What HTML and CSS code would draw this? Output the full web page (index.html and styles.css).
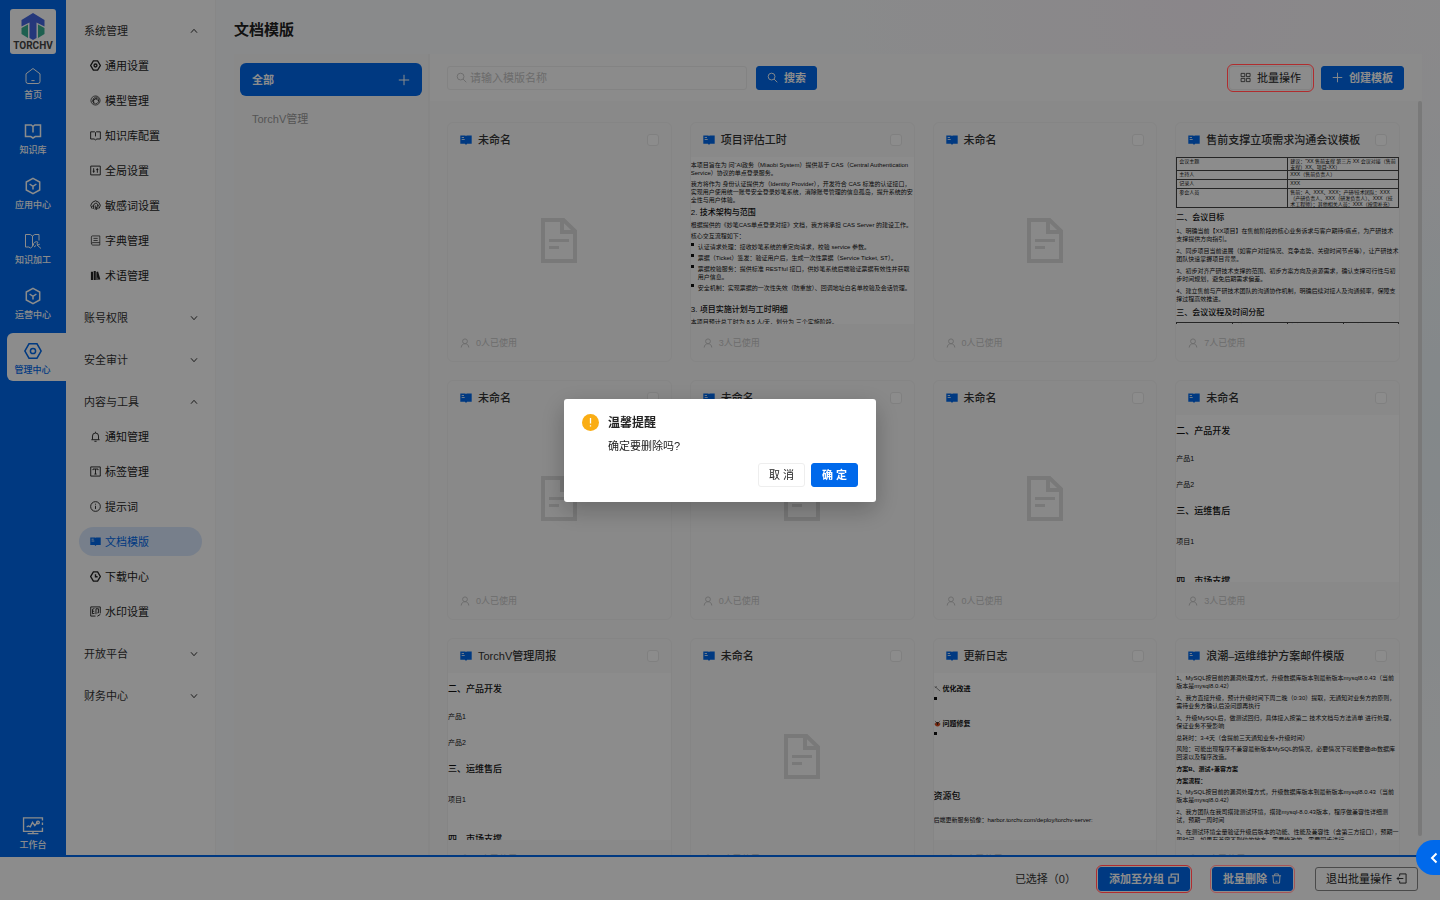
FILE: index.html
```html
<!DOCTYPE html>
<html lang="zh-CN">
<head>
<meta charset="utf-8">
<meta name="viewport" content="width=device-width, initial-scale=1">
<title>文档模版</title>
<link rel="stylesheet" href="styles.css">
</head>
<body>
<svg class="sprite" aria-hidden="true">
  <symbol id="i-home" viewBox="0 0 18 18"><path d="M2 6.800 9 1.500l7 5.300v7.700a2 2 0 0 1-2 2H4a2 2 0 0 1-2-2zM7.400 13.600h3.200"/></symbol>
  <symbol id="i-book" viewBox="0 0 18 18"><path d="M1.500 3h5.700L9 4.500 10.800 3h5.700v11.500h-5.200L9 16l-2.300-1.500H1.500zM9 4.500v6"/></symbol>
  <symbol id="i-cube" viewBox="0 0 18 18"><path d="M9 1.300 15.700 5v8L9 16.700 2.300 13V5zM5.600 7 9 9.300 12.400 7M9 9.300v3.200"/></symbol>
  <symbol id="i-bookpen" viewBox="0 0 18 18"><path d="M8.500 14.500 6.500 16 4.800 15H1.500V2.500h4.700L8.500 4l2.200-1.500h4.300v6M8.500 4v10.500"/><path d="M9.500 13.500a3 3 0 0 1 4.500-3.300l-1.200 1.800 1 1 2-.8M13 13l4 3.500M10 15l2-1.500"/></symbol>
  <symbol id="i-hexgear" viewBox="0 0 18 18"><path d="M5 1.800h8L17.200 9 13 16.200H5L.8 9z"/><circle cx="9" cy="9" r="2.600"/></symbol>
  <symbol id="i-desk" viewBox="0 0 24 20"><path d="M22.500 4V1H1.500v15h21v-4M22.500 6v3M6 18.500h12M12 16v2.500"/><path d="m5 11 2-1 2 1 2.500-5L14 9.500l3-3.500"/><circle cx="17.500" cy="6" r="1.500"/></symbol>
  <symbol id="i-gear" viewBox="0 0 12 12"><path d="M3.700 1h4.600L11.300 6 8.300 11H3.700L.7 6z"/><circle cx="6" cy="6" r="1.600"/></symbol>
  <symbol id="i-model" viewBox="0 0 12 12"><circle cx="6" cy="6" r="5"/><path d="m3.500 4 3-2 3 2.200v3.600l-3.300 2-3-2zM2 7l4-3 4 2.500M4 9.500V5l4-1.500"/></symbol>
  <symbol id="i-sbook" viewBox="0 0 12 12"><path d="M.7 2H5l1 .9L7 2h4.300v7.800H7.500L6 10.800 4.500 9.800H.7zM6 3v4"/></symbol>
  <symbol id="i-slider" viewBox="0 0 12 12"><path d="M.8 1.200h10.400v9.600H.8zM4 3.500v5M8 3.500v5M2.900 6.800h2.200M6.900 5h2.200"/></symbol>
  <symbol id="i-finger" viewBox="0 0 12 12"><path d="M2.200 9.300A5 5 0 1 1 10 9.200M3.500 9.800C4.500 7 3 5 5.500 3.800S9 5 8.500 10M5.500 10.500C6.500 8 5 6.500 6.200 6M1.800 7.500 4 5.500M7 10.800V7.500M9.800 5 8 7"/></symbol>
  <symbol id="i-dict" viewBox="0 0 12 12"><path d="M1.500 9.500V2.200A1.200 1.200 0 0 1 2.700 1h8v10H2.800a1.400 1.400 0 0 1 0-2.700h7.900M3.800 3.700h4.600M3.800 6h4.600"/></symbol>
  <symbol id="i-terms" viewBox="0 0 12 12"><path class="solid" d="M1 2h2.300v9H1zM4 1h2.300v10H4zM7 2.300l1.800-.6L11.300 10l-2 .8L8.300 7.500V11H7z"/></symbol>
  <symbol id="i-bell" viewBox="0 0 12 12"><path d="M1.500 9.500h9M2.700 9.300V5.500a3.300 3.300 0 0 1 6.600 0v3.800M6 2V.8M4.800 11.200h2.400"/></symbol>
  <symbol id="i-tag" viewBox="0 0 12 12"><path d="M.8 1h10.400v10H.8zM3.300 4.500V3.300h5.400v1.200M6 3.300v5.500M4.800 8.800h2.400"/></symbol>
  <symbol id="i-info" viewBox="0 0 12 12"><circle cx="6" cy="6" r="5.300"/><path d="M6 5.200v3.500M6 3v1"/></symbol>
  <symbol id="i-doc" viewBox="0 0 12 12"><path class="solid" d="M.3 1.500h4.900l.8.500.8-.5h4.900v8.300H7L6 10.900 5 9.800H.3z"/><path class="cut" d="M1.700 3.500h2.300M1.700 5.500h3"/></symbol>
  <symbol id="i-clock" viewBox="0 0 12 12"><path d="M3.700 1h4.600L11.300 6 8.300 11H3.700L.7 6zM6 3.500v2.800h2.300"/></symbol>
  <symbol id="i-water" viewBox="0 0 12 12"><path d="M11.200 8V1H.8v10H6M4.800 2.800 2.700 3.500v5l2.300-.6M2.700 5.700h2M6.500 9V3h2.700v4.500H8M8 11.200l3.200-2"/></symbol>
  <symbol id="i-down" viewBox="0 0 8 8"><path d="m1 2.300 3 3.400 3-3.400"/></symbol>
  <symbol id="i-up" viewBox="0 0 8 8"><path d="m1 5.700 3-3.400 3 3.400"/></symbol>
  <symbol id="i-plus" viewBox="0 0 12 12"><path d="M6 .8v10.400M.8 6h10.400"/></symbol>
  <symbol id="i-search" viewBox="0 0 12 12"><circle cx="5" cy="5" r="3.700"/><path d="m7.700 7.700 3.500 3.500"/></symbol>
  <symbol id="i-grid" viewBox="0 0 12 12"><path d="M1.200 1.500h4v3.500h-4zM7 1.500h4v3.500H7zM1.200 7h4v3.500h-4zM7 7h4v3.500H7z"/></symbol>
  <symbol id="i-user" viewBox="0 0 10 10"><circle cx="5" cy="3.300" r="2.400"/><path d="M1.200 9.500c.2-2.300 1.500-3.800 3.800-3.800s3.600 1.500 3.800 3.800"/></symbol>
  <symbol id="i-file" viewBox="0 0 36 45"><path d="M2 2h20.500L34 13v30H2zM21 2v12h13"/><path stroke-width="3" d="M8 22.500h20M8 29.500h10"/></symbol>
  <symbol id="i-copy" viewBox="0 0 12 12"><path d="M3.500 3.500V1.200h7.700v7.600H9M1 4.500h6.800v6.400H1z"/></symbol>
  <symbol id="i-trash" viewBox="0 0 12 12"><path d="M1 3h10M4 3V1h4v2M2.200 3.200l.5 7.800h6.600l.5-7.800M5 9h2"/></symbol>
  <symbol id="i-exit" viewBox="0 0 12 12"><path d="M4 3.200V1h7v10H4V8.800M8 6H1.200M3.200 4 1.200 6l2 2"/></symbol>
</svg>

<div class="app">
  <div class="body">
    <nav class="rail" aria-label="主导航">
      <a class="logo" href="#">
        <svg viewBox="0 0 24 27" aria-hidden="true"><path fill="#4467e0" d="M12 0 23.500 7v6.500L15.500 9.500V25L12 27l-3.500-2V9.500L.5 13.500V7z"/><path fill="#38b092" d="M.5 15 7 11.500V25L.5 21zM23.500 15 17 11.500V25l6.500-4z"/></svg>
        <span>TORCHV</span>
      </a>
      <a class="rail-item" href="#"><svg><use href="#i-home"/></svg><span>首页</span></a>
      <a class="rail-item" href="#"><svg class="bold"><use href="#i-book"/></svg><span>知识库</span></a>
      <a class="rail-item" href="#"><svg class="bold"><use href="#i-cube"/></svg><span>应用中心</span></a>
      <a class="rail-item" href="#"><svg><use href="#i-bookpen"/></svg><span>知识加工</span></a>
      <a class="rail-item" href="#"><svg class="bold"><use href="#i-cube"/></svg><span>运营中心</span></a>
      <a class="rail-item active" href="#" aria-current="page"><svg class="bold"><use href="#i-hexgear"/></svg><span>管理中心</span></a>
      <a class="rail-item rail-bottom" href="#"><svg class="desk"><use href="#i-desk"/></svg><span>工作台</span></a>
    </nav>

    <nav class="side" aria-label="管理菜单">
      <section>
        <button class="group" type="button">系统管理<svg><use href="#i-up"/></svg></button>
        <a class="link" href="#"><svg class="bold"><use href="#i-gear"/></svg>通用设置</a>
        <a class="link" href="#"><svg class="thin"><use href="#i-model"/></svg>模型管理</a>
        <a class="link" href="#"><svg><use href="#i-sbook"/></svg>知识库配置</a>
        <a class="link" href="#"><svg><use href="#i-slider"/></svg>全局设置</a>
        <a class="link" href="#"><svg><use href="#i-finger"/></svg>敏感词设置</a>
        <a class="link" href="#"><svg class="thin"><use href="#i-dict"/></svg>字典管理</a>
        <a class="link" href="#"><svg><use href="#i-terms"/></svg>术语管理</a>
      </section>
      <section><button class="group" type="button">账号权限<svg><use href="#i-down"/></svg></button></section>
      <section><button class="group" type="button">安全审计<svg><use href="#i-down"/></svg></button></section>
      <section>
        <button class="group" type="button">内容与工具<svg><use href="#i-up"/></svg></button>
        <a class="link" href="#"><svg><use href="#i-bell"/></svg>通知管理</a>
        <a class="link" href="#"><svg><use href="#i-tag"/></svg>标签管理</a>
        <a class="link" href="#"><svg><use href="#i-info"/></svg>提示词</a>
        <a class="link current" href="#" aria-current="page"><svg><use href="#i-doc"/></svg>文档模版</a>
        <a class="link" href="#"><svg class="bold"><use href="#i-clock"/></svg>下载中心</a>
        <a class="link" href="#"><svg><use href="#i-water"/></svg>水印设置</a>
      </section>
      <section><button class="group" type="button">开放平台<svg><use href="#i-down"/></svg></button></section>
      <section><button class="group" type="button">财务中心<svg><use href="#i-down"/></svg></button></section>
    </nav>

    <main class="main">
      <h1>文档模版</h1>
      <div class="panel">
        <aside class="folders">
          <div class="folder selected"><a href="#">全部</a><button type="button" aria-label="新增分组"><svg><use href="#i-plus"/></svg></button></div>
          <a class="folder" href="#">TorchV管理</a>
        </aside>
        <div class="content">
          <div class="toolbar">
            <label class="search"><svg><use href="#i-search"/></svg><input type="text" placeholder="请输入模版名称" aria-label="模版名称"></label>
            <button class="btn primary" type="button"><svg><use href="#i-search"/></svg>搜索</button>
            <button class="btn ring push" type="button"><svg class="thin"><use href="#i-grid"/></svg>批量操作</button>
            <button class="btn primary" type="button"><svg><use href="#i-plus"/></svg>创建模板</button>
          </div>
          <div class="list">
            <div class="cards">
              <article class="card">
                <header><svg><use href="#i-doc"/></svg><h2>未命名</h2><input type="checkbox" aria-label="选择未命名"></header>
                <div class="preview empty"><svg><use href="#i-file"/></svg></div>
                <footer><svg><use href="#i-user"/></svg>0人已使用</footer>
              </article>
              <article class="card">
                <header><svg><use href="#i-doc"/></svg><h2>项目评估工时</h2><input type="checkbox" aria-label="选择项目评估工时"></header>
                <div class="preview plan">
                  <p>本项目旨在为 问“AI政务（Miaobi System）提供基于 CAS（Central Authentication Service）协议的单点登录服务。</p>
                  <p>我方将作为 身份认证提供方（Identity Provider），开发符合 CAS 标准的认证接口，实现用户使用统一账号安全登录妙笔系统，消除账号管理的信息孤岛，提升系统的安全性与用户体验。</p>
                  <h3>2. 技术架构与范围</h3>
                  <p>根据提供的《妙笔CAS单点登录对接》文档，我方将承担 CAS Server 的建设工作。</p>
                  <p>核心交互流程如下：</p>
                  <ul>
                    <li><span>认证请求处理：接收妙笔系统的重定向请求，校验 service 参数。</span></li>
                    <li><span>票据（Ticket）签发：验证用户后，生成一次性票据（Service Ticket, ST）。</span></li>
                    <li><span>票据校验服务：提供标准 RESTful 接口，供妙笔系统后端验证票据有效性并获取用户信息。</span></li>
                    <li><span>安全机制：实现票据的一次性失效（防重放）、回调地址白名单校验及会话管理。</span></li>
                  </ul>
                  <h3>3. 项目实施计划与工时明细</h3>
                  <p>本项目预计总工时为 8.5 人/天，划分为 三个实施阶段。</p>
                </div>
                <footer><svg><use href="#i-user"/></svg>3人已使用</footer>
              </article>
              <article class="card">
                <header><svg><use href="#i-doc"/></svg><h2>未命名</h2><input type="checkbox" aria-label="选择未命名"></header>
                <div class="preview empty"><svg><use href="#i-file"/></svg></div>
                <footer><svg><use href="#i-user"/></svg>0人已使用</footer>
              </article>
              <article class="card">
                <header><svg><use href="#i-doc"/></svg><h2>售前支撑立项需求沟通会议模板</h2><input type="checkbox" aria-label="选择售前支撑立项需求沟通会议模板"></header>
                <div class="preview meeting">
                  <table>
                    <tr><td>会议主题</td><td>建议："XX 售前支撑 第三方 XX 会议对接（售前支撑）XX、项目-XX）</td></tr>
                    <tr><td>主持人</td><td>XXX（售前负责人）</td></tr>
                    <tr><td>记录人</td><td>XXX</td></tr>
                    <tr><td>参会人员</td><td>售前：A、XXX、XXX；产研/技术团队：XXX（产研负责人、XXX（研发负责人）、XXX（技术工程师）；其他相关人员：XXX（按需补充）</td></tr>
                  </table>
                  <h3>二、会议目标</h3>
                  <p>1、明确当前【XX项目】在售前阶段的核心业务诉求与客户期待/痛点，为产研技术支撑提供方向指引。</p>
                  <p>2、同步项目当前进展（如客户对接情况、竞争态势、关键时间节点等），让产研技术团队快速掌握项目背景。</p>
                  <p>3、初步对齐产研技术支撑的范围、初步方案方向及资源需求，确认支撑可行性与初步时间规划，避免后期需求偏差。</p>
                  <p>4、建立售前与产研技术团队的沟通协作机制，明确后续对接人及沟通频率，保障支撑过程高效推进。</p>
                  <h3>三、会议议程及时间分配</h3>
                  <table><tr><td>议程环节</td><td>时长</td><td>负责人</td><td>核心内容</td></tr></table>
                </div>
                <footer><svg><use href="#i-user"/></svg>7人已使用</footer>
              </article>

              <article class="card">
                <header><svg><use href="#i-doc"/></svg><h2>未命名</h2><input type="checkbox" aria-label="选择未命名"></header>
                <div class="preview empty"><svg><use href="#i-file"/></svg></div>
                <footer><svg><use href="#i-user"/></svg>0人已使用</footer>
              </article>
              <article class="card">
                <header><svg><use href="#i-doc"/></svg><h2>未命名</h2><input type="checkbox" aria-label="选择未命名"></header>
                <div class="preview empty"><svg><use href="#i-file"/></svg></div>
                <footer><svg><use href="#i-user"/></svg>0人已使用</footer>
              </article>
              <article class="card">
                <header><svg><use href="#i-doc"/></svg><h2>未命名</h2><input type="checkbox" aria-label="选择未命名"></header>
                <div class="preview empty"><svg><use href="#i-file"/></svg></div>
                <footer><svg><use href="#i-user"/></svg>0人已使用</footer>
              </article>
              <article class="card">
                <header><svg><use href="#i-doc"/></svg><h2>未命名</h2><input type="checkbox" aria-label="选择未命名"></header>
                <div class="preview week">
                  <section><h3>二、产品开发</h3><p>产品1</p><p>产品2</p></section>
                  <section><h3>三、运维售后</h3><p>项目1</p></section>
                  <section><h3>四、市场支撑</h3></section>
                </div>
                <footer><svg><use href="#i-user"/></svg>3人已使用</footer>
              </article>

              <article class="card">
                <header><svg><use href="#i-doc"/></svg><h2>TorchV管理周报</h2><input type="checkbox" aria-label="选择TorchV管理周报"></header>
                <div class="preview week">
                  <section><h3>二、产品开发</h3><p>产品1</p><p>产品2</p></section>
                  <section><h3>三、运维售后</h3><p>项目1</p></section>
                  <section><h3>四、市场支撑</h3></section>
                </div>
                <footer><svg><use href="#i-user"/></svg>2人已使用</footer>
              </article>
              <article class="card">
                <header><svg><use href="#i-doc"/></svg><h2>未命名</h2><input type="checkbox" aria-label="选择未命名"></header>
                <div class="preview empty"><svg><use href="#i-file"/></svg></div>
                <footer><svg><use href="#i-user"/></svg>0人已使用</footer>
              </article>
              <article class="card">
                <header><svg><use href="#i-doc"/></svg><h2>更新日志</h2><input type="checkbox" aria-label="选择更新日志"></header>
                <div class="preview changes">
                  <h4><svg viewBox="0 0 8 8"><path fill="none" stroke="#777" d="M1 1.500 2.500 3 7 7M1 3.500l2-2"/></svg>优化改进</h4>
                  <ul><li></li></ul>
                  <h4><svg viewBox="0 0 8 8"><path stroke="#555" stroke-width=".7" d="M1 1l1.500 1.500M7 1 5.500 2.500M.5 4.500h7"/><ellipse cx="4" cy="4.800" rx="2.800" ry="2.600" fill="#d8481a" stroke="none"/><path stroke="#222" d="M4 3.500v2M2.500 3h3"/></svg>问题修复</h4>
                  <ul><li></li></ul>
                  <h3>资源包</h3>
                  <p>后端更新服务镜像：harbor.torchv.com/deploy/torchv-server:</p>
                </div>
                <footer><svg><use href="#i-user"/></svg>1人已使用</footer>
              </article>
              <article class="card">
                <header><svg><use href="#i-doc"/></svg><h2>浪潮–运维维护方案邮件模版</h2><input type="checkbox" aria-label="选择浪潮–运维维护方案邮件模版"></header>
                <div class="preview mail">
                  <p>1、MySQL按目前的漏洞处理方式，升级数据库版本到最新版本mysql8.0.43（当前版本是mysql8.0.42）</p>
                  <p>2、我方直接升级，预计升级时间下周二晚（0:30）提取，无通知对业务方的原则，需待业务方确认后没问题再执行</p>
                  <p>3、升级MySQL后，做测试回归，具体接入按第二 技术文档与方法清单 进行处理，保证业务不受影响</p>
                  <p>总耗时：3-4天（含提前三天通知业务+升级时间）</p>
                  <p class="tight">风险：可能出现程序不兼容最新版本MySQL的情况，必要情况下可能要做db数据库回滚以及程序改造。</p>
                  <p><b>方案B、测试+兼容方案</b></p>
                  <p><b>方案流程：</b></p>
                  <p class="tight">1、MySQL按目前的漏洞处理方式，升级数据库版本到最新版本mysql8.0.43（当前版本是mysql8.0.42）</p>
                  <p>2、我方团队在我司搭建测试环境，搭建mysql-8.0.43版本，程序做兼容性详细测试，预期一周时间</p>
                  <p>3、在测试环境全量验证升级后版本的功能、性能及兼容性（含第三方接口），预期一周时间，如果有兼容不到位的地方，需要修改的，需要同步进行</p>
                </div>
                <footer><svg><use href="#i-user"/></svg>1人已使用</footer>
              </article>
            </div>
            <div class="thumb"></div>
          </div>
        </div>
      </div>
    </main>
  </div>

  <footer class="batch">
    <span>已选择（0）</span>
    <button class="btn primary ring" type="button">添加至分组<svg class="bold"><use href="#i-copy"/></svg></button>
    <button class="btn primary ring soft" type="button">批量删除<svg><use href="#i-trash"/></svg></button>
    <button class="btn exit" type="button">退出批量操作<svg><use href="#i-exit"/></svg></button>
  </footer>
</div>

<div class="mask">
  <div class="dialog" role="alertdialog" aria-labelledby="dlg-title" aria-describedby="dlg-text">
    <svg class="warn" viewBox="0 0 17 17" aria-hidden="true"><circle cx="8.500" cy="8.500" r="8.500" fill="#faad14" stroke="none"/><path d="M8.500 4v5.500M8.500 11.200v1.400" stroke="#fff" stroke-width="1.300"/></svg>
    <div class="dialog-body">
      <h2 id="dlg-title">温馨提醒</h2>
      <p id="dlg-text">确定要删除吗?</p>
      <div class="actions">
        <button class="btn" type="button">取 消</button>
        <button class="btn primary" type="button">确 定</button>
      </div>
    </div>
  </div>
</div>
<button class="drawer" type="button" aria-label="展开"><svg viewBox="0 0 8 12"><path d="M6.500 1.500 2 6l4.500 4.500"/></svg></button>
</body>
</html>
```
FILE: styles.css
```css
:root {
  --blue: #0069eb;
  --text: #333;
}
* { box-sizing: border-box; }
body {
  margin: 0;
  font: 11px/16px "Liberation Sans", "Noto Sans CJK SC", sans-serif;
  color: var(--text);
}
h1, h2, h3, h4, p, ul { margin: 0; padding: 0; }
ul { list-style: none; }
a { color: inherit; text-decoration: none; }
button, input { font: inherit; color: inherit; }
button { padding: 0; border: 0; background: none; }
svg { display: block; flex: none; fill: none; stroke: currentColor; stroke-width: 1; }
svg.bold { stroke-width: 1.5; }
svg.thin { stroke-width: 0.8; }
.solid { fill: currentColor; stroke: none; }
.cut { stroke: #fff; stroke-width: 0.8; }
.sprite { position: absolute; width: 0; height: 0; }

.app { display: flex; flex-direction: column; height: 100vh; overflow: hidden; }
.body { display: flex; flex: 1; min-height: 0; }

/* Left rail */
.rail {
  display: flex;
  flex-direction: column;
  align-items: center;
  width: 66px;
  padding-top: 9px;
  background: var(--blue);
  color: #fff;
}
.logo {
  display: flex;
  flex-direction: column;
  align-items: center;
  width: 46px;
  height: 45px;
  margin-bottom: 4px;
  padding-top: 4px;
  border-radius: 3px;
  background: #fff;
  color: #444;
  font: bold 10px/12px Roboto, sans-serif;
}
.logo svg { width: 24px; height: 27px; stroke: none; }
.rail-item {
  display: flex;
  flex-direction: column;
  align-items: center;
  gap: 4px;
  width: 51px;
  height: 48px;
  margin-bottom: 7px;
  padding-top: 9px;
  font-size: 9px;
  line-height: 12px;
  font-weight: 500;
}
.rail-item svg { width: 18px; height: 18px; }
.rail-item.active {
  align-self: flex-end;
  width: 59px;
  padding-right: 8px;
  border-radius: 6px 0 0 6px;
  background: #fff;
  color: var(--blue);
}
.rail-item.rail-bottom { margin: auto 0 0; padding-top: 10px; }
.rail-item .desk { width: 22px; height: 18px; stroke-width: 1.5; }

/* Submenu */
.side {
  display: flex;
  flex-direction: column;
  gap: 8px;
  width: 150px;
  padding: 14px 13px 0;
  border-right: 1px solid #f6f6f6;
  background: #fff;
}
.group {
  display: flex;
  align-items: center;
  justify-content: space-between;
  width: 100%;
  height: 34px;
  padding: 0 4px 0 5px;
}
.group svg { width: 8px; height: 8px; }
.link {
  display: flex;
  align-items: center;
  gap: 4px;
  height: 29px;
  margin: 3px 0;
  padding-left: 11px;
  border-radius: 15px;
  color: #222;
}
.link svg { width: 11px; height: 11px; }
.link + .link { margin-top: 6px; }
.link.current { background: #d9e8fd; color: var(--blue); }

/* Main area */
.main {
  display: flex;
  flex: 1;
  flex-direction: column;
  min-width: 0;
  padding: 18px 18px 0;
  background:
    radial-gradient(circle at 80% 0, #fbf5fb, transparent 30%),
    radial-gradient(circle at 100% 50%, #eff7fc, transparent 30%),
    #fafcfd;
}
h1 { font-size: 15px; line-height: 24px; color: #222; }
.panel { display: flex; flex: 1; min-height: 0; margin-top: 12px; }
.folders { width: 196px; padding: 9px 6px; border-right: 2px solid #f5f5f5; background: #fafafa; }
.folder {
  display: flex;
  align-items: center;
  justify-content: space-between;
  height: 33px;
  margin-bottom: 6px;
  padding: 0 12px;
  border-radius: 6px;
  color: #9a9a9a;
}
.folder.selected { background: var(--blue); color: #fff; font-weight: bold; }
.folder svg { width: 12px; height: 12px; }
.content { display: flex; flex: 1; flex-direction: column; min-width: 0; background: #fdfdfd; }
.toolbar { display: flex; align-items: center; gap: 9px; height: 47px; padding: 0 18px 0 17px; }
.search {
  display: flex;
  align-items: center;
  gap: 3px;
  width: 300px;
  height: 24px;
  padding: 0 8px;
  border: 1px solid #eee;
  border-radius: 3px;
  color: #c4c4c4;
}
.search svg { width: 11px; height: 11px; }
.search input { flex: 1; min-width: 0; padding: 0; border: 0; outline: 0; background: none; }
.search input::placeholder { color: #c4c4c4; opacity: 1; }

.btn {
  display: flex;
  align-items: center;
  justify-content: center;
  gap: 6px;
  height: 24px;
  padding: 0 10px;
  border: 1px solid #eee;
  border-radius: 3px;
  background: #fff;
  color: #222;
  white-space: nowrap;
}
.btn svg { width: 11px; height: 11px; }
.btn.primary { border-color: var(--blue); background: var(--blue); color: #fff; font-weight: bold; }
.push { margin-left: auto; }

/* Highlight frame that stays visible above the mask */
.ring { position: relative; }
.ring::after {
  content: "";
  position: absolute;
  inset: -3px;
  z-index: 20;
  border: 1px solid #b02c2e;
  border-radius: 6px;
}
.ring.soft::after { border-color: #a65557; }

/* Template cards */
.list { display: flex; flex: 1; align-items: flex-start; min-height: 0; overflow: hidden; background: #f9f9f9; }
.cards {
  display: grid;
  flex: 1;
  grid-template-columns: repeat(4, minmax(0, 1fr));
  gap: 18px;
  padding: 21px 18px 18px 17px;
}
.thumb { width: 4px; height: 735px; border-radius: 2px; background: #dcdcdc; }
.card { overflow: hidden; border: 1px solid #f3f3f3; border-radius: 6px; background: #fafafa; }
.card header { display: flex; align-items: center; gap: 6px; height: 34px; padding: 0 12px; }
.card header svg { width: 12px; height: 12px; color: var(--blue); }
.card h2 { flex: 1; font-size: 11px; line-height: 16px; font-weight: 500; white-space: nowrap; }
.card input {
  width: 12px;
  height: 12px;
  margin: 0;
  appearance: none;
  border: 1px solid #eaeaea;
  border-radius: 3px;
  background: #fff;
}
.card footer {
  display: flex;
  align-items: center;
  gap: 6px;
  height: 37px;
  padding: 0 12px;
  color: #c6c6c6;
  font-size: 9px;
}
.card footer svg { width: 10px; height: 10px; }
.preview { height: 167px; overflow: hidden; background: #fff; color: #111; font-size: 6px; line-height: 8px; }
.preview.empty { display: grid; place-items: center; background: #fafafa; }
.empty svg { width: 36px; height: 45px; stroke: #dcdcdc; stroke-width: 4; }

.plan { padding-top: 4px; }
.plan p { margin-bottom: 3px; }
.plan h3 { margin-bottom: 2px; font-size: 8px; line-height: 12px; font-weight: 500; }
.plan ul { margin-bottom: 12px; }
.plan li { display: flex; gap: 4px; margin-bottom: 3px; }
li::before { content: ""; flex: none; width: 3px; height: 3px; background: currentColor; }

.meeting table { width: 100%; border-collapse: collapse; table-layout: fixed; font-size: 5px; line-height: 6px; }
.meeting td { height: 9px; padding: 0 2px; border: 1px solid #444; vertical-align: top; }
.meeting h3 { margin: 4px 0 3px; font-size: 8px; line-height: 12px; font-weight: 500; }
.meeting p { margin-bottom: 4px; }

.week { padding-top: 9px; font-size: 7px; line-height: 10px; }
.week h3 { font-size: 9px; line-height: 14px; font-weight: 500; }
.week section { display: flex; flex-direction: column; gap: 16px; margin-bottom: 14px; }
.week section:nth-child(2) { gap: 19px; margin-bottom: 27px; }

.changes { padding-top: 11px; }
.changes h4 { display: flex; gap: 2px; font-size: 7px; line-height: 10px; }
.changes h4 svg { width: 7px; height: 9px; }
.changes ul { padding: 3px 0 19px; }
.changes li { display: flex; }
.changes h3 { margin: 36px 0 14px; font-size: 9px; line-height: 12px; font-weight: 500; }

.mail { padding-top: 1px; }
.mail p { margin-bottom: 4px; }
.mail p.tight { margin-top: -1px; }

/* Batch bar */
.batch {
  display: flex;
  align-items: center;
  justify-content: flex-end;
  gap: 22px;
  height: 45px;
  padding: 0 22px;
  border-top: 2px solid var(--blue);
  background: #fff;
}
.batch .btn { gap: 4px; }
.batch .exit { border-color: #888; }

/* Dialog */
.mask {
  position: fixed;
  inset: 0;
  z-index: 10;
  display: grid;
  place-items: center;
  background: rgba(0, 0, 0, 0.45);
}
.dialog {
  display: flex;
  align-items: flex-start;
  gap: 9px;
  width: 312px;
  padding: 15px 18px;
  border-radius: 3px;
  background: #fff;
  box-shadow: 0 8px 24px rgba(0, 0, 0, 0.25);
}
.warn { width: 17px; height: 17px; }
.dialog-body { flex: 1; }
.dialog h2 { font-size: 12px; line-height: 18px; color: #222; }
.dialog p { margin-top: 6px; color: #222; }
.actions { display: flex; justify-content: flex-end; gap: 6px; margin-top: 9px; }
.drawer {
  position: fixed;
  right: 0;
  bottom: 25px;
  z-index: 30;
  width: 24px;
  height: 35px;
  padding-left: 14px;
  border-radius: 18px 0 0 18px;
  background: var(--blue);
}
.drawer svg { width: 8px; height: 12px; stroke: #fff; stroke-width: 2; }
```
